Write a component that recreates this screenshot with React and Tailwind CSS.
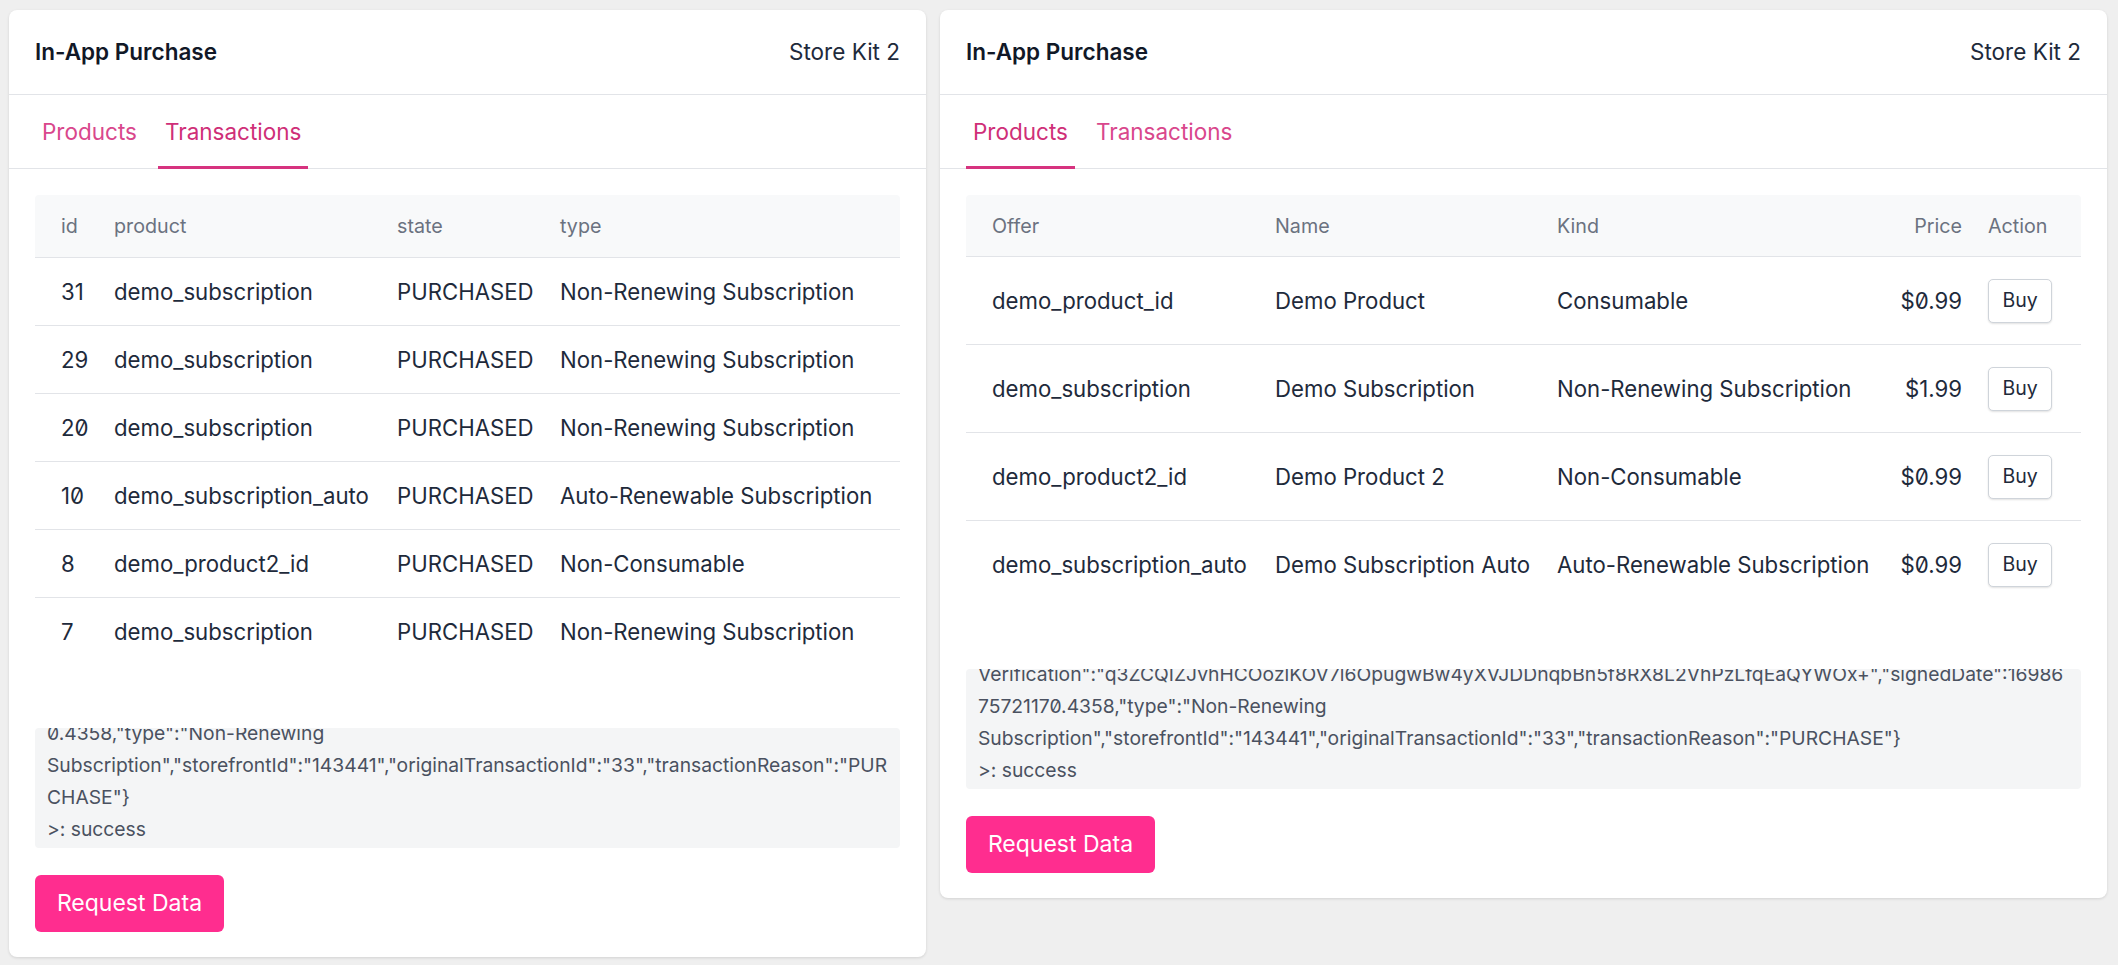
import { useState } from 'react'

const transactions = [
  { id: 31, product: 'demo_subscription', state: 'PURCHASED', type: 'Non-Renewing Subscription' },
  { id: 29, product: 'demo_subscription', state: 'PURCHASED', type: 'Non-Renewing Subscription' },
  { id: 20, product: 'demo_subscription', state: 'PURCHASED', type: 'Non-Renewing Subscription' },
  { id: 10, product: 'demo_subscription_auto', state: 'PURCHASED', type: 'Auto-Renewable Subscription' },
  { id: 8, product: 'demo_product2_id', state: 'PURCHASED', type: 'Non-Consumable' },
  { id: 7, product: 'demo_subscription', state: 'PURCHASED', type: 'Non-Renewing Subscription' },
]

const products = [
  { offer: 'demo_product_id', name: 'Demo Product', kind: 'Consumable', price: '$0.99' },
  { offer: 'demo_subscription', name: 'Demo Subscription', kind: 'Non-Renewing Subscription', price: '$1.99' },
  { offer: 'demo_product2_id', name: 'Demo Product 2', kind: 'Non-Consumable', price: '$0.99' },
  { offer: 'demo_subscription_auto', name: 'Demo Subscription Auto', kind: 'Auto-Renewable Subscription', price: '$0.99' },
]

// tail of the log output, wrapped the way the panel shows it
const leftLog = [
  '0.4358,"type":"Non-Renewing',
  'Subscription","storefrontId":"143441","originalTransactionId":"33","transactionReason":"PUR',
  'CHASE"}',
  '>: success',
]

const rightLog = [
  'Verification":"q3ZCQIZJvhHCOozlKOV7l6OpugwBw4yXVJDDnqbBn5f8RX8L2VhPzLfqEaQYWOx+","signedDate":16986',
  '75721170.4358,"type":"Non-Renewing',
  'Subscription","storefrontId":"143441","originalTransactionId":"33","transactionReason":"PURCHASE"}',
  '>: success',
]

function Tabs({ active, onChange }) {
  return (
    <div className="flex h-[74px] gap-[14px] border-b border-[#e2e4e8] px-[26px]">
      {['Products', 'Transactions'].map((t) => (
        <button
          key={t}
          onClick={() => onChange(t)}
          className={
            t === active
              ? '-mb-px flex h-[74px] items-center border-b-[3px] border-[#d6337f] px-[7px] pt-[3px] text-[22.5px] text-[#cf2f78]'
              : '-mb-px flex h-[74px] items-center border-b-[3px] border-transparent px-[7px] pt-[3px] text-[22.5px] text-[#d9478c]'
          }
        >
          {t}
        </button>
      ))}
    </div>
  )
}

function LogBox({ lines }) {
  return (
    <div className="flex h-[120px] flex-col justify-end overflow-hidden rounded-[4px] bg-[#f4f5f6] px-[12px] pb-[3px] text-[19.3px] leading-[32px] text-[#4a5160]">
      {lines.map((l, i) => (
        <div key={i} className="whitespace-nowrap">
          {l}
        </div>
      ))}
    </div>
  )
}

function TransactionsTable() {
  const cols = 'grid grid-cols-[66px_283px_163px_1fr] items-center'
  return (
    <div className="mb-[62px]">
      <div className={`${cols} h-[63px] rounded-t-[4px] border-b border-[#e2e4e8] bg-[#f8f9fa] pt-[2px] text-[19.7px] text-[#6b7280]`}>
        <div className="pl-[26px]">id</div>
        <div className="pl-[13px]">product</div>
        <div className="pl-[13px]">state</div>
        <div className="pl-[13px]">type</div>
      </div>
      {transactions.map((t, i) => (
        <div
          key={t.id}
          className={`${cols} h-[68px] text-[22.2px] text-[#1e2a3b] ${i < transactions.length - 1 ? 'border-b border-[#e2e4e8]' : ''}`}
        >
          <div className="pl-[26px]">{t.id}</div>
          <div className="pl-[13px] whitespace-nowrap">{t.product}</div>
          <div className="pl-[13px]">{t.state}</div>
          <div className="pl-[13px] whitespace-nowrap">{t.type}</div>
        </div>
      ))}
    </div>
  )
}

function ProductsTable() {
  const cols = 'grid grid-cols-[296px_282px_1fr_89px_106px] items-center'
  return (
    <div className="mb-[60px]">
      <div className={`${cols} h-[62px] rounded-t-[4px] border-b border-[#e2e4e8] bg-[#f8f9fa] pt-[2px] text-[19.7px] text-[#6b7280]`}>
        <div className="pl-[26px]">Offer</div>
        <div className="pl-[13px]">Name</div>
        <div className="pl-[13px]">Kind</div>
        <div className="pr-[13px] text-right">Price</div>
        <div className="pl-[13px]">Action</div>
      </div>
      {products.map((p, i) => (
        <div
          key={p.offer}
          className={`${cols} h-[88px] text-[22.2px] text-[#1e2a3b] ${i < products.length - 1 ? 'border-b border-[#e2e4e8]' : ''}`}
        >
          <div className="pl-[26px] whitespace-nowrap">{p.offer}</div>
          <div className="pl-[13px] whitespace-nowrap">{p.name}</div>
          <div className="pl-[13px] whitespace-nowrap">{p.kind}</div>
          <div className="pr-[13px] text-right">{p.price}</div>
          <div className="pl-[13px]">
            <button className="h-[44px] w-[64px] rounded-[5px] border border-[#cfd4da] bg-white text-[19.5px] text-[#1e2a3b] shadow-[0_1px_2px_rgba(0,0,0,0.12)]">
              Buy
            </button>
          </div>
        </div>
      ))}
    </div>
  )
}

function PurchaseCard({ initialTab, width }) {
  const [tab, setTab] = useState(initialTab)
  return (
    <div className={`${width} rounded-[8px] bg-white shadow-[0_1px_3px_rgba(0,0,0,0.12)]`}>
      <div className="flex h-[85px] items-center justify-between border-b border-[#e2e4e8] px-[26px]">
        <span className="text-[22.5px] font-semibold text-[#111827]">In-App Purchase</span>
        <span className="text-[22.5px] text-[#1e2a3b]">Store Kit 2</span>
      </div>
      <Tabs active={tab} onChange={setTab} />
      <div className="px-[26px] pt-[26px] pb-[25px]">
        {tab === 'Transactions' ? <TransactionsTable /> : <ProductsTable />}
        <LogBox lines={tab === 'Transactions' ? leftLog : rightLog} />
        <button className="mt-[27px] h-[57px] w-[189px] rounded-[6px] bg-[#ff2d8f] text-[23px] text-white">
          Request Data
        </button>
      </div>
    </div>
  )
}

export default function App() {
  return (
    <div className="min-h-screen bg-[#efefef] pt-[10px] pl-[9px] font-['Inter',sans-serif] slashed-zero">
      <div className="flex items-start gap-[14px]">
        <PurchaseCard initialTab="Transactions" width="w-[917px]" />
        <PurchaseCard initialTab="Products" width="w-[1167px]" />
      </div>
    </div>
  )
}
